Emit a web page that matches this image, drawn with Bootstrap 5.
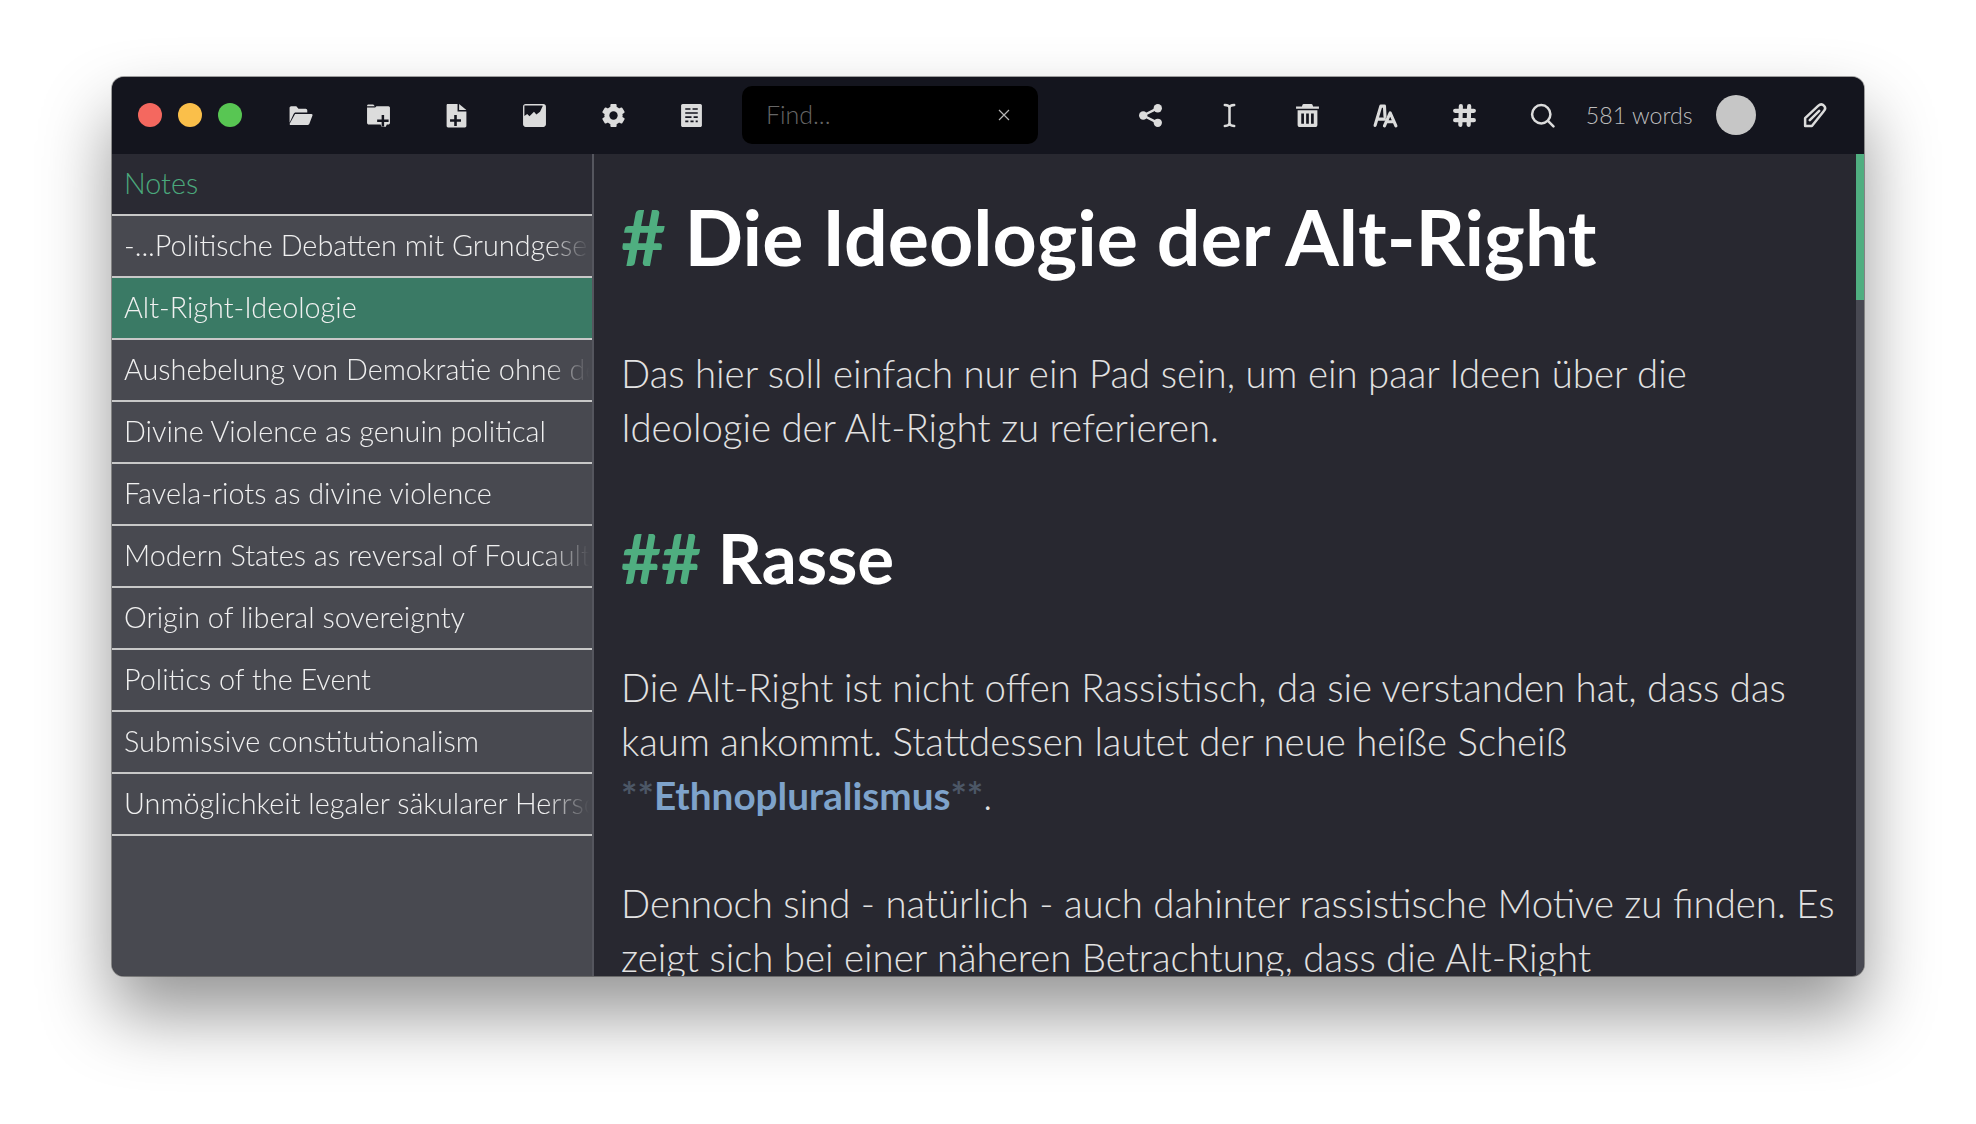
<!DOCTYPE html>
<html lang="de">
<head>
  <meta charset="UTF-8" />
  <title>Notes</title>
  <link href="https://cdn.jsdelivr.net/npm/bootstrap@5.3.3/dist/css/bootstrap.min.css" rel="stylesheet">
  <style>
    html, body { height: 100%; }
    body { background: #fff; font-family: Lato, "Liberation Sans", sans-serif; font-weight: 300; overflow: hidden; padding: 77px 112px 0 112px; }
    .app-window { height: 899px; border-radius: 12px; overflow: hidden; background: #282830; box-shadow: 0 0 0 1px rgba(0,0,0,.35), 0 38px 70px rgba(0,0,0,.42); }
    .tool-bar { height: 77px; flex: none; background: #14151e; padding: 0 0 1px 26px; color: #dcdcdc; }
    .light { width: 24px; height: 24px; border-radius: 50%; margin-right: 16px; }
    .light-red { background: #f4685f; }
    .light-yellow { background: #fabf4a; }
    .light-green { background: #58c653; }
    .tool-icon { width: 25px; height: 25px; flex: none; margin-right: 53.3px; fill: #dcdcdc; }
    .line-icon { fill: none; stroke: #dcdcdc; stroke-width: 2.4; stroke-linecap: round; stroke-linejoin: round; }
    .icon-dark { fill: #14151e; }
    .first-icon { margin-left: 29.5px; }
    .find-box { width: 296px; height: 58px; background: #000; border-radius: 10px; margin: 0 100.5px 0 -15.4px; padding: 0 28px 0 24px; color: #666; font-size: 25px; }
    .find-close { width: 12px; height: 12px; stroke: #b5b5b5; stroke-width: 1.2; }
    .word-count { font-size: 23.2px; color: #bdbdbd; margin: 0 23px 0 -22.4px; white-space: nowrap; }
    .avatar-dot { width: 40px; height: 40px; border-radius: 50%; background: #c6c6c6; margin-right: 46.5px; }
    .main-area { min-height: 0; }
    .side-pane { width: 482px; flex: none; background: #484950; border-right: 2px solid #55565e; }
    .side-head { height: 60px; background: #2a2a33; color: #4aa87c; font-size: 28.8px; padding: 0 0 0 12px; }
    .note-row { height: 62px; border-bottom: 2px solid #c8c8c8; color: #f0f0f0; font-size: 28.8px; padding: 0 0 0 12px; white-space: nowrap; overflow: hidden; }
    .note-row span { display: block; width: 468px; overflow: hidden; -webkit-mask-image: linear-gradient(to right, #000 calc(100% - 46px), transparent calc(100% - 3px)); mask-image: linear-gradient(to right, #000 calc(100% - 46px), transparent calc(100% - 3px)); }
    .note-row.note-active { background: #3a7a65; }
    .side-top-line { border-top: 2px solid #c8c8c8; }
    .doc-pane { min-width: 0; overflow: hidden; padding: 40px 20px 0 27px; color: #e2e2e2; font-size: 38.4px; line-height: 54px; }
    .doc-pane h1, .doc-pane h2 { color: #fff; font-weight: 700; font-family: inherit; margin: 0; }
    .doc-pane h1 { font-size: 77.2px; line-height: 84px; margin-bottom: 68px; }
    .doc-pane h2 { font-size: 69px; line-height: 80px; margin: 64px 0 62px; }
    .doc-pane p { margin: 0 0 54px; }
    .head-mark { color: #4fae80; }
    .bold-mark { color: #4c5766; font-weight: 700; font-size: 38.7px; }
    .bold-word { color: #7ea3cb; font-weight: 700; font-size: 38.7px; }
    .scroll-rail { width: 8px; flex: none; background: #484952; }
    .scroll-thumb { height: 146px; background: #50ae80; }
  </style>
</head>
<body>
  <div class="app-window d-flex flex-column">
    <!-- Werkzeugleiste -->
    <div class="tool-bar d-flex align-items-center">
      <div class="light light-red"></div>
      <div class="light light-yellow"></div>
      <div class="light light-green"></div>
      <svg class="tool-icon first-icon" viewBox="0 0 24 24"><path d="M1.500 19V4.500C1.500 3.700 2.200 3 3 3h5l2 2.500h7c.8 0 1.500.7 1.500 1.500v2H7.500c-1 0-1.800.6-2.100 1.500zM6.800 10.500h15.700c.9 0 1.300.7 1 1.500l-3 8c-.2.6-.8 1-1.400 1H2.500c-.7 0-1.100-.6-.9-1.200z"/></svg>
      <svg class="tool-icon" viewBox="0 0 24 24"><path d="M1 2.800C1.100 2 1.700 1.500 2.500 1.500h4.500L8.500 3H1zM1 4.300h7.800l1.200-1.300h11.500c.9 0 1.500.7 1.500 1.500V19c0 1-.7 1.700-1.700 1.700h-1.300l-1 2h-4l-1-2H2.800C1.800 20.700 1 20 1 19z"/><path class="icon-dark" d="M15 11.500h2.400v4.300h4.300v2.400h-4.300v4.300H15v-4.300h-4.300v-2.400H15z"/></svg>
      <svg class="tool-icon" viewBox="0 0 24 24"><path fill-rule="evenodd" d="M2.500 2.200C2.500 1.500 3 1 3.700 1H13v7.200h8.500V22c0 .8-.6 1.400-1.400 1.400H3.900c-.8 0-1.400-.6-1.400-1.400zM9.800 11.500v4H5.800v2.500h4v4h2.500v-4h4v-2.500h-4v-4z"/><path d="M14.500 1l7 5.800h-7z"/></svg>
      <svg class="tool-icon" viewBox="0 0 24 24"><path fill-rule="evenodd" d="M3.500 1h17C21.900 1 23 2.100 23 3.500v17c0 1.400-1.100 2.500-2.500 2.500h-17C2.100 23 1 21.900 1 20.500v-17C1 2.100 2.100 1 3.500 1zM2.300 12.500l2.700-2 2.200 2.200 4.300-4.200 2.300 2.500 3.500-2.500 2.500-5.500V2.300H2.300z"/></svg>
      <svg class="tool-icon" viewBox="0 0 24 24"><circle cx="12" cy="12" r="8.800"/><rect x="9" y="1" width="6" height="22" rx="1"/><rect x="9" y="1" width="6" height="22" rx="1" transform="rotate(60 12 12)"/><rect x="9" y="1" width="6" height="22" rx="1" transform="rotate(120 12 12)"/><circle class="icon-dark" cx="12" cy="12" r="4"/></svg>
      <svg class="tool-icon" viewBox="0 0 24 24"><path fill-rule="evenodd" d="M3.500 1h17c.8 0 1.500.7 1.500 1.500v19c0 .8-.7 1.500-1.500 1.500h-17c-.8 0-1.500-.7-1.500-1.500v-19C2 1.700 2.700 1 3.500 1zM6 5v1.500h5V5zm7 0v1.500h5V5zM6 8.800v1.500h12V8.800zM6 12.800v1.500h6v-1.500zm8 0v1.500h4v-1.500zM6 16.800v1.700h3v-1.700zm5 0v1.700h3v-1.700zm5 0v1.700h2v-1.700z"/></svg>
      <div class="find-box d-flex align-items-center justify-content-between">
        <span>Find...</span>
        <svg class="find-close" viewBox="0 0 12 12" fill="none"><path d="M1 1l10 10M11 1L1 11"/></svg>
      </div>
      <svg class="tool-icon" viewBox="0 0 24 24"><circle cx="19" cy="5" r="4"/><circle cx="5" cy="12" r="4"/><circle cx="19" cy="19" r="4"/><path class="line-icon" d="M19 5L5 12l14 7"/></svg>
      <svg class="tool-icon line-icon" viewBox="0 0 24 24"><path d="M7.500 2c3 0 4.500 1 4.500 3v14c0 2-1.500 3-4.500 3M16.500 2c-3 0-4.500 1-4.500 3v14c0 2 1.500 3 4.500 3"/></svg>
      <svg class="tool-icon" viewBox="0 0 24 24"><path fill-rule="evenodd" d="M8.500 1h7c.8 0 1.300.4 1.500 1.100l.3 1.200H23v2.200H1V3.300h5.700L7 2.100C7.200 1.400 7.700 1 8.500 1zM2.500 7h19v14c0 1.200-.9 2-2 2h-15c-1.100 0-2-.8-2-2zm3.500 3v10h2.600V10zm4.700 0v10h2.600V10zm4.700 0v10h2.600V10z"/></svg>
      <svg class="tool-icon line-icon" viewBox="0 0 24 24"><path stroke-width="3" d="M2 21.500L7.500 3H11l.5 10M4.500 15.500H11"/><path stroke-width="3" d="M11 22L16.500 9.500 22 22M13.300 18h6.400"/></svg>
      <svg class="tool-icon line-icon" viewBox="0 0 24 24"><path stroke-width="4" d="M8.500 3L8 21M16.500 3L16 21M3 7.500h18M3 16.500h18"/></svg>
      <svg class="tool-icon line-icon" viewBox="0 0 24 24"><circle cx="10.800" cy="10.800" r="8.800"/><path d="M17.500 17.500l5 5"/></svg>
      <div class="word-count">581 words</div>
      <div class="avatar-dot"></div>
      <svg class="tool-icon line-icon m-0" viewBox="0 0 24 24"><path d="M3 22v-7.500L15.500 2.800c2-1.800 4-1.800 5.500-.2 1.500 1.500 1.500 3.500 0 5L9.500 22zM7.500 16.500L16.500 7.500"/></svg>
    </div>
    <div class="main-area d-flex flex-grow-1">
      <!-- Notizliste -->
      <div class="side-pane d-flex flex-column">
        <div class="side-head d-flex align-items-center">Notes</div>
        <div class="side-top-line"></div>
        <div class="note-row d-flex align-items-center"><span>-...Politische Debatten mit Grundgesetz</span></div>
        <div class="note-row note-active d-flex align-items-center"><span>Alt-Right-Ideologie</span></div>
        <div class="note-row d-flex align-items-center"><span>Aushebelung von Demokratie ohne den</span></div>
        <div class="note-row d-flex align-items-center"><span>Divine Violence as genuin political</span></div>
        <div class="note-row d-flex align-items-center"><span>Favela-riots as divine violence</span></div>
        <div class="note-row d-flex align-items-center"><span>Modern States as reversal of Foucault</span></div>
        <div class="note-row d-flex align-items-center"><span>Origin of liberal sovereignty</span></div>
        <div class="note-row d-flex align-items-center"><span>Politics of the Event</span></div>
        <div class="note-row d-flex align-items-center"><span>Submissive constitutionalism</span></div>
        <div class="note-row d-flex align-items-center"><span>Unmöglichkeit legaler säkularer Herrschaft</span></div>
      </div>
      <!-- Editor -->
      <div class="doc-pane flex-grow-1">
        <h1><span class="head-mark">#</span> Die Ideologie der Alt-Right</h1>
        <p>Das hier soll einfach nur ein Pad sein, um ein paar Ideen über die Ideologie der Alt-Right zu referieren.</p>
        <h2><span class="head-mark">##</span> Rasse</h2>
        <p>Die Alt-Right ist nicht offen Rassistisch, da sie verstanden hat, dass das kaum ankommt. Stattdessen lautet der neue heiße Scheiß <span class="bold-mark">**</span><span class="bold-word">Ethnopluralismus</span><span class="bold-mark">**</span>.</p>
        <p>Dennoch sind - natürlich - auch dahinter rassistische Motive zu finden. Es zeigt sich bei einer näheren Betrachtung, dass die Alt-Right</p>
      </div>
      <div class="scroll-rail"><div class="scroll-thumb"></div></div>
    </div>
  </div>
  <script src="https://cdn.jsdelivr.net/npm/bootstrap@5.3.3/dist/js/bootstrap.bundle.min.js"></script>
</body>
</html>
